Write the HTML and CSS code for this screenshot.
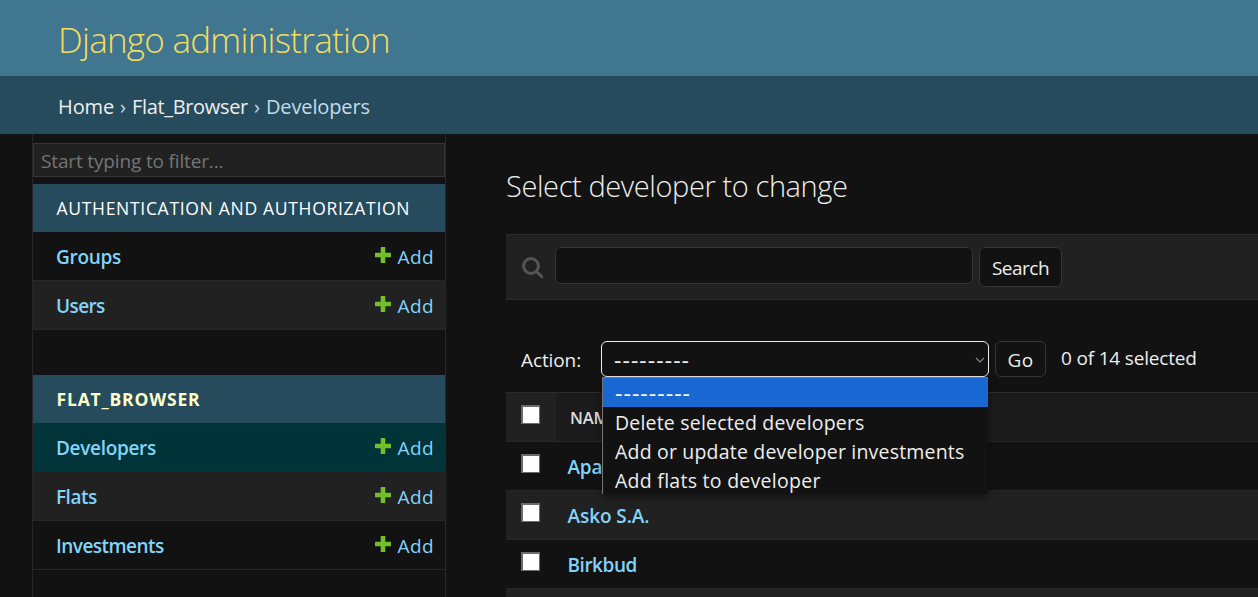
FILE: index.html
```
<!DOCTYPE html>
<html lang="en">
<head>
<meta charset="utf-8">
<title>Select developer to change | Django site admin</title>
<link rel="stylesheet" href="styles.css">
</head>
<body>
<svg class="defs" aria-hidden="true">
  <symbol id="plus" viewBox="0 0 16 16"><path d="M6.2 0h3.6q.5 0 .5.5v5.2h5.2q.5 0 .5.5v3.6q0 .5-.5.5h-5.2v5.200q0 .5-.5.5H6.200q-.5 0-.5-.5v-5.200H.5q-.5 0-.5-.5V6.200q0-.5.5-.5h5.200V.5q0-.5.5-.5z"/></symbol>
</svg>
<header class="header"><h1 class="site-name">Django administration</h1></header>
<nav class="breadcrumbs">
  <a class="bc-home" href="#">Home</a><span class="sep">›</span><a class="bc-app" href="#">Flat_Browser</a><span class="sep">›</span><span class="bc-current">Developers</span>
</nav>
<div class="main">
  <aside class="sidebar">
    <input class="filter" type="text" placeholder="Start typing to filter...">
    <section class="app">
      <h2 class="app-title">AUTHENTICATION AND AUTHORIZATION</h2>
      <div class="model"><a class="name groups" href="#">Groups</a><a class="add" href="#"><svg class="plus"><use href="#plus"/></svg>Add</a></div>
      <div class="model alt"><a class="name users" href="#">Users</a><a class="add" href="#"><svg class="plus"><use href="#plus"/></svg>Add</a></div>
    </section>
    <section class="app">
      <h2 class="app-title current-app">FLAT_BROWSER</h2>
      <div class="model current"><a class="name" href="#">Developers</a><a class="add" href="#"><svg class="plus"><use href="#plus"/></svg>Add</a></div>
      <div class="model alt"><a class="name flats" href="#">Flats</a><a class="add" href="#"><svg class="plus"><use href="#plus"/></svg>Add</a></div>
      <div class="model"><a class="name investments" href="#">Investments</a><a class="add" href="#"><svg class="plus"><use href="#plus"/></svg>Add</a></div>
    </section>
  </aside>
  <main class="content">
    <h1 class="page-title">Select developer to change</h1>
    <div class="toolbar">
      <svg class="magnifier" viewBox="0 0 22 22"><circle cx="9" cy="9" r="7.400"/><path d="M14.500 14.500l5.300 5.300"/></svg>
      <input class="search-input" type="text">
      <button class="button search-button">Search</button>
    </div>
    <div class="actions">
      <span class="action-label">Action:</span>
      <div class="select">
        <span class="dashes">---------</span>
        <svg class="chevron" viewBox="0 0 10 6"><path d="M1 1l4 4 4-4"/></svg>
        <div class="menu">
          <div class="option selected"><span class="dashes">---------</span></div>
          <div class="option">Delete selected developers</div>
          <div class="option">Add or update developer investments</div>
          <div class="option flats-option">Add flats to developer</div>
        </div>
      </div>
      <button class="button go-button">Go</button>
      <span class="counter">0 of 14 selected</span>
    </div>
    <div class="results">
      <div class="row head"><div class="cell-check"><span class="check"></span></div><div class="cell-name">NAM</div></div>
      <div class="row"><div class="cell-check"><span class="check"></span></div><a class="cell-name" href="#">Apa</a></div>
      <div class="row alt"><div class="cell-check"><span class="check"></span></div><a class="cell-name asko" href="#">Asko S.A.</a></div>
      <div class="row"><div class="cell-check"><span class="check"></span></div><a class="cell-name birkbud" href="#">Birkbud</a></div>
      <div class="row-edge"></div>
    </div>
  </main>
</div>
</body>
</html>
```
FILE: styles.css
```
* { box-sizing: border-box; }

body {
  margin: 0;
  height: 597px;
  overflow: hidden;
  display: flex;
  flex-direction: column;
  background: #121212;
  color: #eee;
  font: 400 19px/28px "Open Sans", sans-serif;
}

a { color: #81d4fa; text-decoration: none; }
h1, h2 { margin: 0; }
input, button { font: inherit; color: inherit; margin: 0; }
.defs { position: absolute; width: 0; height: 0; }

.header {
  flex: none;
  height: 76px;
  padding: 15px 0 0 58px;
  background: #417690;
}
.site-name {
  font-size: 35px;
  font-weight: 300;
  line-height: 49px;
  letter-spacing: -.74px;
  color: #f5dd5d;
}

.breadcrumbs {
  flex: none;
  height: 58px;
  padding: 16px 0 0 58px;
  display: flex;
  background: #264b5d;
  color: #c4dce8;
  font-size: 20px;
  line-height: 29px;
}
.breadcrumbs a { color: #eee; }
.sep { width: 18px; text-align: center; }
.bc-home { width: 56px; letter-spacing: -.1px; }
.bc-app { width: 116px; letter-spacing: -.34px; }
.bc-current { letter-spacing: -.14px; }

.main { flex: 1; display: flex; min-height: 0; }

.sidebar {
  flex: none;
  width: 414px;
  margin-left: 32px;
  padding-top: 9px;
  border: solid #272727;
  border-width: 0 1px;
}
.filter {
  display: block;
  width: 412px;
  height: 34px;
  margin-bottom: 7px;
  padding: 2px 7px 0;
  border: 1px solid #353535;
  background: #212121;
  letter-spacing: -.15px;
}
.filter::placeholder { color: #757575; opacity: 1; }
.app { margin-bottom: 45px; }
.app:last-child { margin-bottom: 0; }
.app-title {
  height: 48px;
  padding-left: 23.500px;
  background: #264b5d;
  color: #fff;
  font-size: 17.5px;
  font-weight: 400;
  line-height: 49px;
  letter-spacing: .7px;
}
.current-app { color: #ffc; font-weight: 700; letter-spacing: .82px; }
.model {
  display: flex;
  justify-content: space-between;
  height: 49px;
  padding: 0 11px 0 23px;
  border-bottom: 1px solid #272727;
  line-height: 50px;
}
.alt { background: #212121; }
.current { background: #003438; }
.name { font-weight: 600; letter-spacing: -.32px; }
.groups { letter-spacing: -.3px; }
.users { letter-spacing: -.6px; }
.flats { letter-spacing: -.5px; }
.investments { letter-spacing: -.54px; }
.add { display: flex; letter-spacing: .4px; }
.plus { width: 16px; height: 16px; margin: 15px 7px 0 0; fill: #70bf2b; }

.content { flex: none; width: 752px; margin-left: 60px; }
.page-title {
  height: 100px;
  padding-top: 32px;
  font-size: 29px;
  font-weight: 300;
  line-height: 39px;
  letter-spacing: -.4px;
  color: #eee;
}
.toolbar {
  display: flex;
  align-items: flex-start;
  height: 66px;
  padding: 12px 0 0 16px;
  background: #212121;
  border: solid #2b2b2b;
  border-width: 1px 0;
}
.magnifier {
  width: 22px;
  height: 22px;
  margin: 10px 11px 0 0;
  fill: none;
  stroke: #555;
  stroke-width: 3;
  stroke-linecap: round;
}
.search-input {
  width: 418px;
  height: 37px;
  margin-right: 6px;
  border: 1px solid #353535;
  border-radius: 6px;
  background: #121212;
}
.button {
  padding: 0;
  border: 1px solid #353535;
  border-radius: 6px;
  background: #121212;
  color: #eee;
}
.search-button { width: 83px; height: 40px; padding-top: 2px; letter-spacing: -.5px; }

.actions {
  display: flex;
  height: 92px;
  padding: 41px 0 0 15px;
}
.action-label { width: 80px; line-height: 38px; letter-spacing: -.1px; }
.select {
  position: relative;
  display: flex;
  justify-content: space-between;
  width: 388px;
  height: 36px;
  margin-right: 6px;
  padding: 0 3px 0 12px;
  border: 1px solid #eee;
  border-radius: 6px;
  line-height: 37px;
}
.dashes { display: block; font-size: 23px; letter-spacing: 1.05px; }
.chevron { width: 10px; height: 6px; margin-top: 15px; fill: none; stroke: #858585; stroke-width: 1.200; }
.menu {
  position: absolute;
  z-index: 1;
  top: 35px;
  left: 0;
  width: 386px;
  height: 117px;
  border: solid #767676;
  border-width: 1px 0 0 1px;
  background: #121212;
  box-shadow: 0 4px 8px rgba(0, 0, 0, .4);
}
.option {
  height: 29px;
  padding-left: 12px;
  color: #eee;
  font-size: 19.5px;
  line-height: 31px;
  letter-spacing: .19px;
  white-space: nowrap;
}
.option.selected { background: #1967d2; color: #fff; }
.flats-option { letter-spacing: .27px; }
.go-button { width: 51px; height: 36px; padding-top: 1px; letter-spacing: .4px; }
.counter { margin-left: 15px; line-height: 34px; letter-spacing: -.18px; }

.row {
  display: flex;
  height: 49px;
  border-bottom: 1px solid #272727;
}
.cell-check { width: 50px; padding: 12px 0 0 15px; }
.check {
  display: block;
  width: 19px;
  height: 19px;
  border: solid #6b6b6b;
  border-width: 2px 1px 1px 2px;
  background: #fff;
}
.cell-name { flex: 1; padding-left: 11.500px; font-weight: 600; line-height: 50px; letter-spacing: -.2px; }
.asko { letter-spacing: -.08px; }
.birkbud { letter-spacing: -.47px; }
.head { height: 50px; background: #212121; border-top: 1px solid #2b2b2b; }
.head .cell-name {
  padding-left: 14px;
  background: #1b1b1b;
  color: #ddd;
  font-size: 16.500px;
  letter-spacing: -.2px;
}
.row-edge { height: 8px; background: #212121; }
```
